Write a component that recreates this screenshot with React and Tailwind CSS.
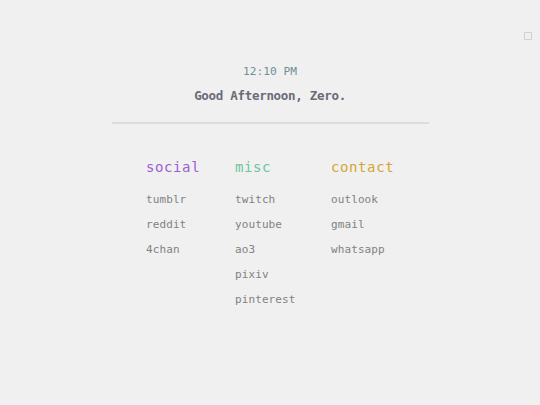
import React from 'react';

const columns = [
  { title: 'social', color: 'text-[#9a5fd3]', width: 'w-[89px]', links: ['tumblr', 'reddit', '4chan'] },
  { title: 'misc', color: 'text-[#6fc4a0]', width: 'w-[96px]', links: ['twitch', 'youtube', 'ao3', 'pixiv', 'pinterest'] },
  { title: 'contact', color: 'text-[#d4a634]', width: 'w-[63px]', links: ['outlook', 'gmail', 'whatsapp'] },
];

export default function App() {
  return (
    <div className="relative min-h-screen bg-[#f0f0f0] font-['DejaVu_Sans_Mono',monospace]">
      <div className="absolute right-[8px] top-[32px] h-[8px] w-[8px] border border-[#d2d2d2]" />

      <div className="flex flex-col items-center pt-[64px]">
        <div className="text-[11.2px] leading-[16px] text-[#6f9096]">12:10 PM</div>
        <div className="mt-[8px] text-[12.5px] font-bold leading-[16px] tracking-[-0.3px] text-[#6b6b77]">
          Good Afternoon, Zero.
        </div>
        <div className="mt-[18px] h-[2px] w-[317px] bg-[#dcdcdc]" />

        <div className="mt-[33px] flex">
          {columns.map((col) => (
            <div key={col.title} className={col.width}>
              <div className={'text-[14px] leading-[20px] tracking-[0.6px] ' + col.color}>{col.title}</div>
              <ul className="mt-[15px] flex flex-col gap-[9px]">
                {col.links.map((l) => (
                  <li key={l} className="text-[11px] leading-[16px] tracking-[0.1px] text-[#828282]">
                    <a href="#">{l}</a>
                  </li>
                ))}
              </ul>
            </div>
          ))}
        </div>
      </div>
    </div>
  );
}
